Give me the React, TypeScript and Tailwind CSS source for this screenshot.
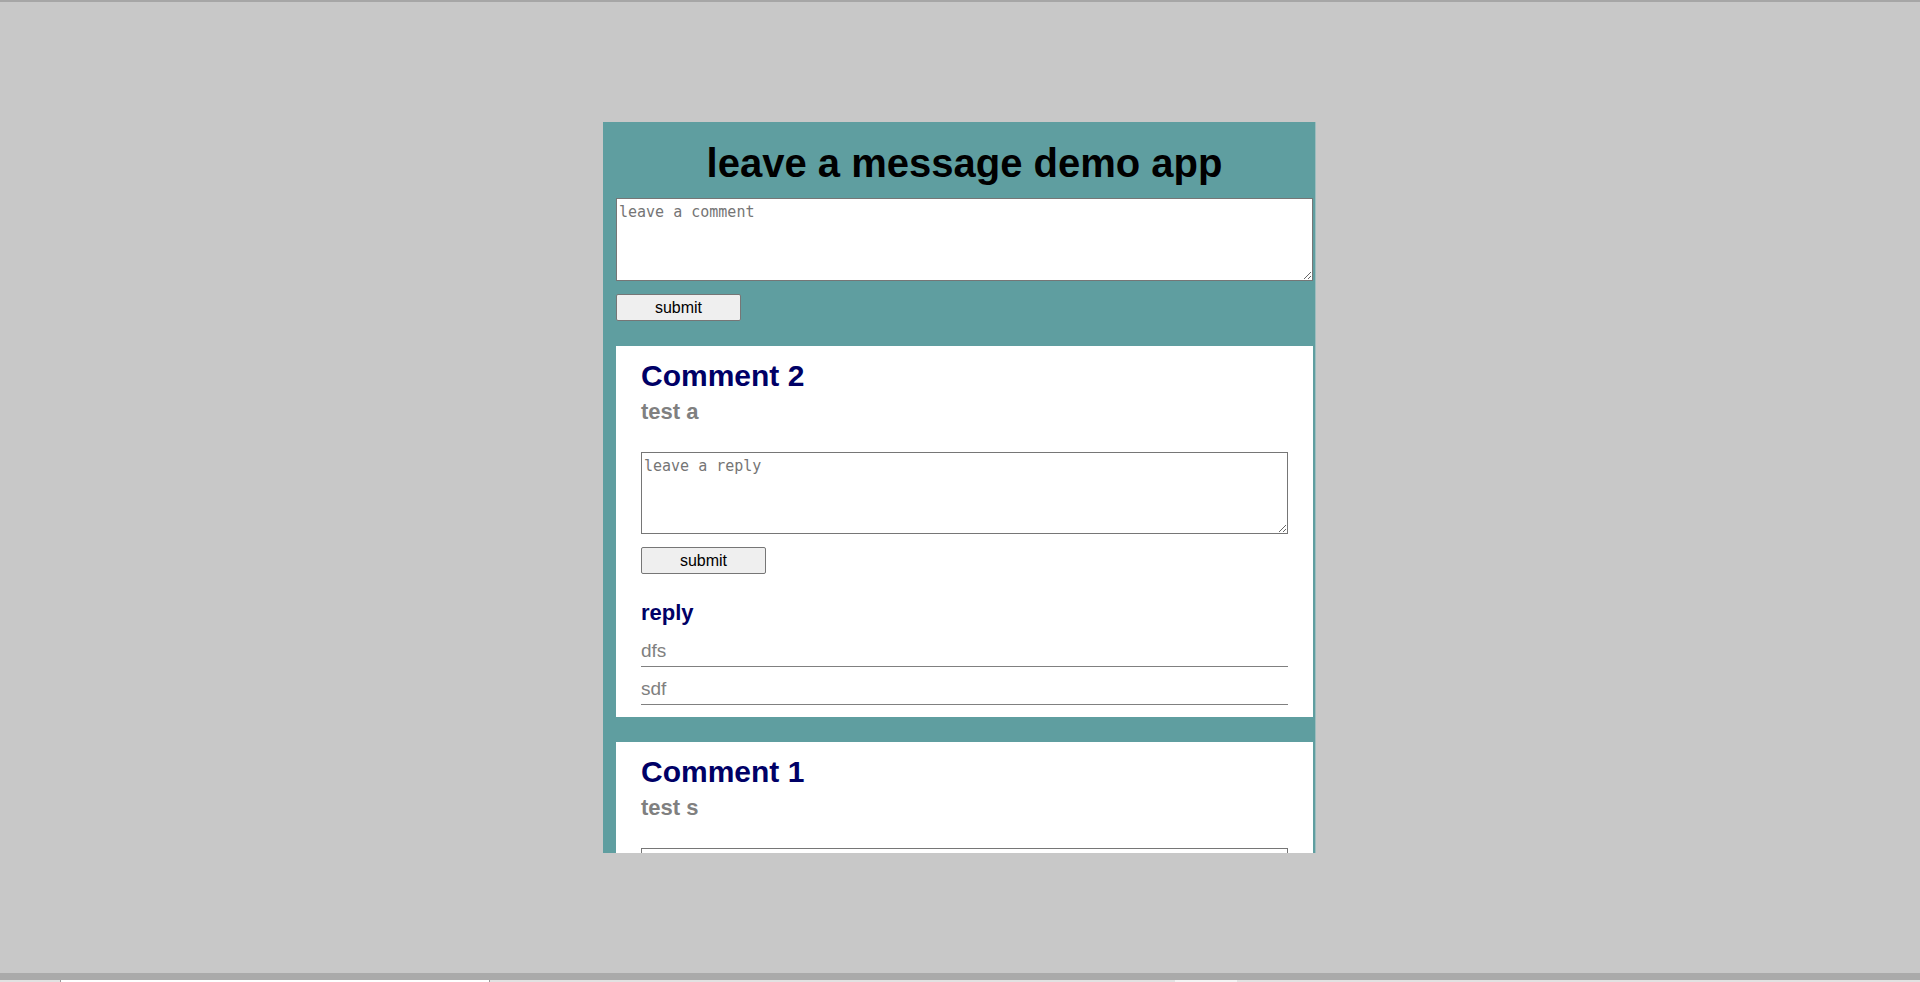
import React from "react";

const NAVY = "text-[#000066]";

function Card({ title, body, replies }: { title: string; body: string; replies: string[] }) {
  return (
    <div className="mt-[25px] bg-white px-[25px] pt-[13px] pb-[12px]">
      <h2 className={`text-[30px] font-bold leading-[34px] ${NAVY}`}>{title}</h2>
      <p className="mt-[6px] text-[22px] font-bold leading-[25px] text-[#808080]">{body}</p>
      <textarea
        placeholder="leave a reply"
        className="mt-[28px] block h-[82px] w-full border border-[#767676] bg-white p-[2px] font-['DejaVu_Sans_Mono',monospace] text-[15px] placeholder:text-[#757575]"
      />
      <button className="mt-[13px] block h-[27px] w-[125px] rounded-[2px] border border-[#767676] bg-[#efefef] text-[16px] text-black">
        submit
      </button>
      {replies.length > 0 && (
        <>
          <h3 className={`mt-[26px] text-[22px] font-bold leading-[25px] ${NAVY}`}>reply</h3>
          <div className="mt-[15px]">
            {replies.map((r, i) => (
              <div
                key={i}
                className={`${i > 0 ? "mt-[11px]" : ""} border-b border-[#808080] pb-[4px] text-[19px] leading-[22px] text-[#808080]`}
              >
                {r}
              </div>
            ))}
          </div>
        </>
      )}
    </div>
  );
}

export default function App() {
  return (
    <div className="flex h-[982px] flex-col overflow-hidden bg-[#c8c8c8] font-['Liberation_Sans',Arial,sans-serif]">
      <div className="h-[2px] shrink-0 bg-[#a6a6a6]" />
      <div className="h-[120px] shrink-0" />
      <div className="shrink-0 pr-[1px]">
        <div className="mx-auto h-[731px] w-[713px] overflow-hidden border-r border-[#9dbcbd] bg-[#5f9ea0] pt-[18px] pr-[2px] pl-[13px]">
          <h1 className="text-center text-[40px] font-bold leading-[46px] text-black">leave a message demo app</h1>
          <textarea
            placeholder="leave a comment"
            className="mt-[12px] block h-[83px] w-full border border-[#767676] bg-white p-[2px] font-['DejaVu_Sans_Mono',monospace] text-[15px] placeholder:text-[#757575]"
          />
          <button className="mt-[13px] block h-[27px] w-[125px] rounded-[2px] border border-[#767676] bg-[#efefef] text-[16px] text-black">
            submit
          </button>
          <Card title="Comment 2" body="test a" replies={["dfs", "sdf"]} />
          <Card title="Comment 1" body="test s" replies={[]} />
        </div>
      </div>
      <div className="flex-1" />
      <div className="h-[7px] shrink-0 bg-[#aaaaaa]" />
      <div className="flex h-[2px] shrink-0 bg-[#e2e2e2]">
        <div className="w-[60px]" />
        <div className="w-[430px] border-x border-[#9a9a9a] bg-white" />
        <div className="w-[685px]" />
        <div className="w-[62px] bg-[#f4f4f4]" />
      </div>
    </div>
  );
}
